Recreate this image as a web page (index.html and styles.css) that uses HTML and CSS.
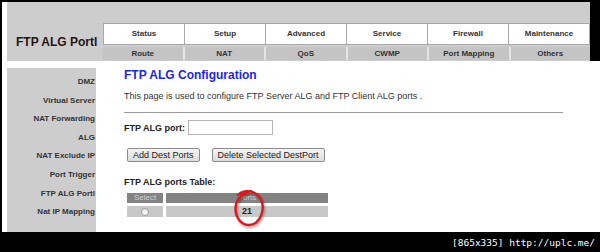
FILE: index.html
```html
<!DOCTYPE html>
<html lang="en">
<head>
    <meta charset="UTF-8">
    <meta name="viewport" content="width=device-width, initial-scale=1.0">
    <title>FTP ALG Portl</title>
    <link rel="stylesheet" href="styles.css">
</head>
<body>
    <div class="frame">
        <div class="top">
            <div class="header">
                <div class="page-name">FTP ALG Portl</div>
                <div class="nav">
                    <div class="nav-main">
                        <div>Status</div>
                        <div>Setup</div>
                        <div>Advanced</div>
                        <div>Service</div>
                        <div>Firewall</div>
                        <div>Maintenance</div>
                    </div>
                    <div class="nav-sub">
                        <div>Route</div>
                        <div>NAT</div>
                        <div>QoS</div>
                        <div>CWMP</div>
                        <div>Port Mapping</div>
                        <div>Others</div>
                    </div>
                </div>
            </div>
            <div class="edge"></div>
        </div>
        <div class="page">
            <div class="sidebar">
                <div>DMZ</div>
                <div>Virtual Server</div>
                <div>NAT Forwarding</div>
                <div>ALG</div>
                <div>NAT Exclude IP</div>
                <div>Port Trigger</div>
                <div>FTP ALG Portl</div>
                <div>Nat IP Mapping</div>
            </div>
            <div class="content">
                <h1>FTP ALG Configuration</h1>
                <p class="intro">This page is used to configure FTP Server ALG and FTP Client ALG ports .</p>
                <div class="rule"></div>
                <div class="port-row">
                    <label for="port">FTP ALG port:</label>
                    <input type="text" id="port">
                </div>
                <div class="buttons">
                    <button>Add Dest Ports</button>
                    <button>Delete Selected DestPort</button>
                </div>
                <div class="table-title">FTP ALG ports Table:</div>
                <div class="table-wrap">
                    <table>
                        <tr>
                            <th class="col-select">Select</th>
                            <th class="col-ports">Ports</th>
                        </tr>
                        <tr>
                            <td><span class="radio"></span></td>
                            <td class="port-num">21</td>
                        </tr>
                    </table>
                    <svg class="mark" width="50" height="50" viewBox="0 0 50 50">
                        <path d="M14 10 C20 4, 32 5, 37 14 C42 26, 35 40, 25 40 C15 40, 10 29, 12 19 C14 12, 20 7, 27 6" fill="none" stroke="#e3141a" stroke-width="2.4" stroke-linecap="round"/>
                    </svg>
                </div>
            </div>
        </div>
    </div>
    <div class="footer">[865x335] http://uplc.me/</div>
</body>
</html>
```

FILE: styles.css
```css
html, body {
    margin: 0;
    padding: 0;
}
body {
    background-color: #000;
    font-family: "Liberation Sans", Arial, sans-serif;
    width: 600px;
    height: 252px;
    overflow: hidden;
}
.frame {
    margin: 2px 0 0 2px;
    width: 598px;
    height: 230px;
    background-color: #fff;
    padding-left: 5px;
    box-sizing: border-box;
}
.top {
    display: flex;
    height: 59px;
}
.header {
    width: 583px;
    background-color: #cdcdcd;
    display: flex;
}
.edge {
    flex: 1;
    background-color: #000;
}
.page-name {
    width: 96px;
    padding: 33px 0 0 9px;
    box-sizing: border-box;
    font-size: 12px;
    font-weight: bold;
    color: #261414;
}
.nav {
    width: 487px;
    padding-top: 21px;
}
.nav-main {
    display: grid;
    grid-template-columns: repeat(6, 1fr);
    gap: 1px;
    background-color: #a9a9a9;
    border: 1px solid #a9a9a9;
    height: 20px;
}
.nav-main div {
    background-color: #fff;
    font-size: 8px;
    font-weight: bold;
    color: #333;
    text-align: center;
    line-height: 20px;
}
.nav-sub {
    display: grid;
    grid-template-columns: repeat(6, 1fr);
    gap: 2px;
    margin-top: 2px;
    background-color: #e4e4e4;
    height: 13px;
}
.nav-sub div {
    background-color: #c4c4c4;
    font-size: 8px;
    font-weight: bold;
    color: #333;
    text-align: center;
    line-height: 13px;
}
.page {
    display: flex;
    margin-top: 7px;
    height: 164px;
}
.sidebar {
    width: 89px;
    background-color: #cdcdcd;
    padding: 5px 1px 0 0;
    box-sizing: border-box;
}
.sidebar div {
    text-align: right;
    font-size: 8px;
    font-weight: bold;
    color: #333;
    line-height: 18.6px;
}
.content {
    padding-left: 28px;
    flex: 1;
}
h1 {
    margin: 0;
    font-size: 12px;
    line-height: 14px;
    color: #1b26e8;
}
.intro {
    margin: 9px 0 0 0;
    font-size: 9px;
    line-height: 11px;
    color: #333;
}
.rule {
    margin-top: 10px;
    width: 439px;
    border-top: 1px solid #9a9a9a;
}
.port-row {
    display: flex;
    align-items: center;
    margin-top: 7px;
    height: 15px;
}
label {
    font-size: 9px;
    font-weight: bold;
    color: #222;
    margin-right: 3px;
}
input {
    width: 85px;
    height: 15px;
    box-sizing: border-box;
    border: 1px solid #b5b5b5;
    padding: 0;
    margin: 0;
}
.buttons {
    display: flex;
    gap: 12px;
    margin: 13px 0 0 3px;
}
button {
    font-family: "Liberation Sans", Arial, sans-serif;
    font-size: 9px;
    color: #222;
    height: 14px;
    padding: 0 5px;
    margin: 0;
    line-height: 12px;
    background: linear-gradient(#f4f4f4, #dcdcdc);
    border: 1px solid #8c8c8c;
    border-radius: 2px;
}
.table-title {
    margin-top: 15px;
    font-size: 9px;
    line-height: 11px;
    font-weight: bold;
    color: #222;
}
.table-wrap {
    position: relative;
    margin-top: 2px;
}
table {
    border-collapse: separate;
    border-spacing: 3px;
}
th, td {
    padding: 0;
    font-size: 8px;
    text-align: center;
}
th {
    background-color: #838383;
    color: #cfcfcf;
    font-weight: normal;
    height: 10px;
    line-height: 10px;
}
td {
    background-color: #c8c8c8;
    height: 11px;
    line-height: 11px;
}
.col-select {
    width: 36px;
}
.col-ports {
    width: 162px;
}
.port-num {
    font-size: 9px;
    font-weight: bold;
    color: #222;
}
.radio {
    display: inline-block;
    width: 6px;
    height: 6px;
    border: 1px solid #a0a0a0;
    border-radius: 50%;
    background: linear-gradient(#e8e8e8, #fff);
    vertical-align: middle;
}
.mark {
    position: absolute;
    left: 100px;
    top: -5px;
    filter: drop-shadow(1px 2px 1px rgba(0, 0, 0, 0.35));
}
.footer {
    height: 20px;
    line-height: 22px;
    text-align: right;
    padding-right: 5px;
    color: #fff;
    font-family: "DejaVu Sans Mono", monospace;
    font-size: 9.5px;
}
```
